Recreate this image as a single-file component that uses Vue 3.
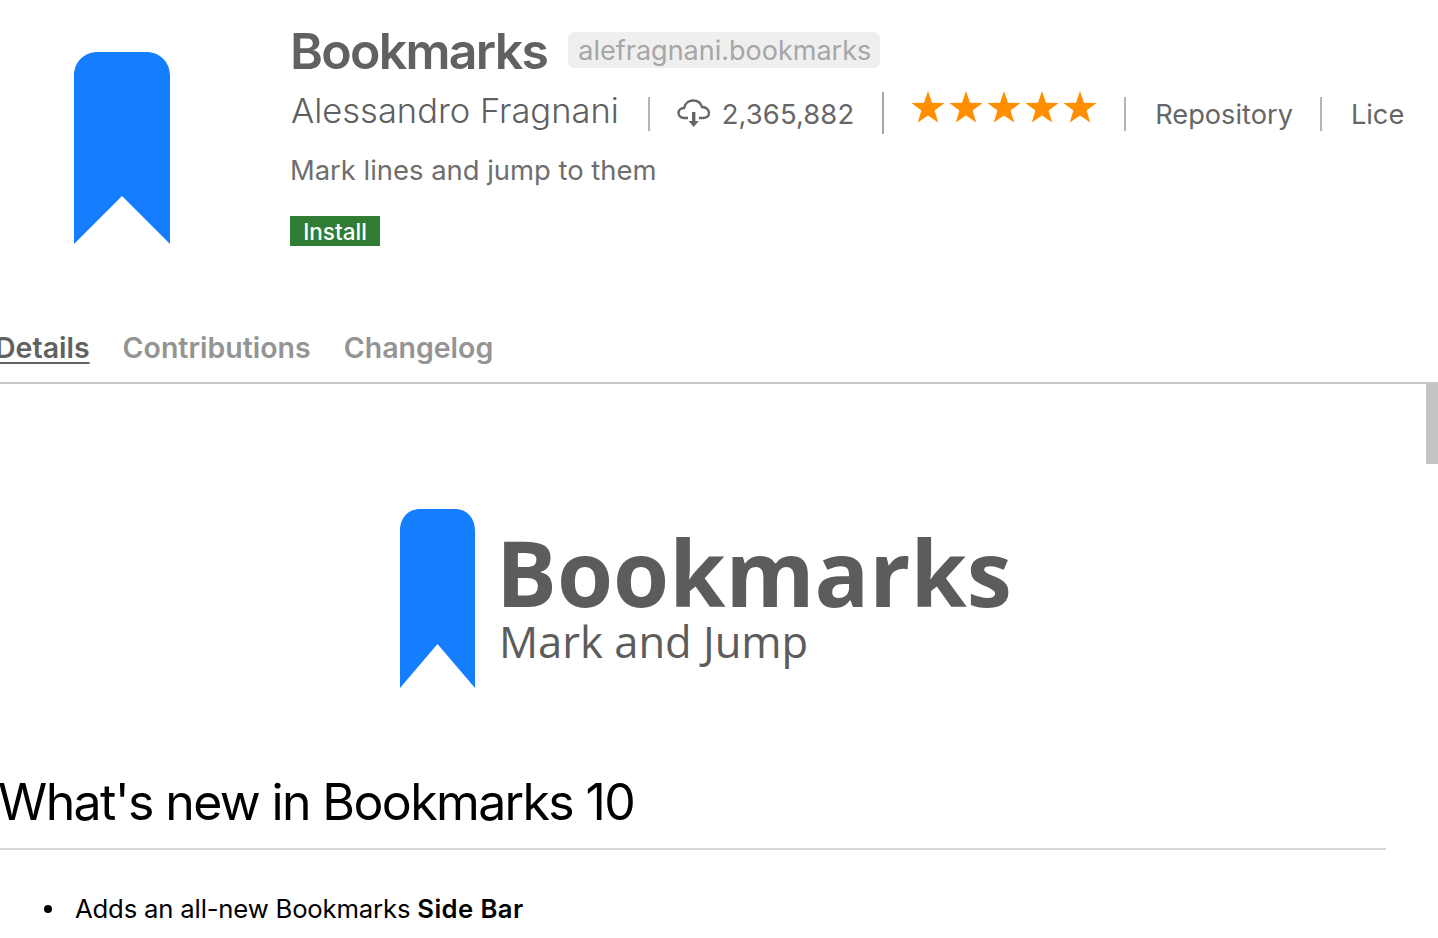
<template>
  <div class="editor">
    <header class="header">
      <div class="icon-box">
        <svg class="ext-icon" viewBox="0 0 96 192">
          <path d="M0 192V24C0 10 10 0 24 0H72C86 0 96 10 96 24V192L48 144Z" fill="#157eff" />
        </svg>
      </div>
      <div class="details">
        <div class="title-row">
          <span class="name">Bookmarks</span>
          <span class="identifier">alefragnani.bookmarks</span>
        </div>
        <div class="subtitle">
          <span class="item author">Alessandro Fragnani</span>
          <span class="item installs">
            <svg class="cloud" viewBox="0 0 34 30">
              <path d="M11 20H7C3.5 20 1.5 17.5 1.5 15C1.5 12 4 10 7 10C8 5 12 2.5 16 2.5C21 2.5 24 5.5 25 9C29.5 9 32 12 32 15C32 18 29.5 20 26 20H22" fill="none" stroke="#666" stroke-width="2.4" />
              <path d="M15 14H18.4V23H21.8L16.7 29L11.6 23H15Z" fill="#666" />
            </svg>
            <span class="count">2,365,882</span>
          </span>
          <span class="item rating">
            <svg v-for="n in 5" :key="n" class="star" viewBox="0 0 34 32">
              <polygon points="17,0 21,11.8 33.6,12 23.6,19.6 27.2,31.6 17,24.4 6.8,31.6 10.4,19.6 0.4,12 13,11.8" fill="#ff8e00" />
            </svg>
          </span>
          <span class="item">Repository</span>
          <span class="item last">License</span>
        </div>
        <div class="description">Mark lines and jump to them</div>
        <button class="install">Install</button>
      </div>
    </header>

    <nav class="tabs">
      <a class="tab active">Details</a>
      <a class="tab">Contributions</a>
      <a class="tab">Changelog</a>
    </nav>

    <main class="readme">
      <div class="logo">
        <svg class="logo-mark" viewBox="0 0 75 179">
          <path d="M0 179V22C0 9 8 0 20 0H55C67 0 75 9 75 22V179L37.5 135Z" fill="#157eff" />
        </svg>
        <div class="logo-text">
          <span class="logo-title">Bookmarks</span>
          <span class="logo-sub">Mark and Jump</span>
        </div>
      </div>
      <h1 class="heading">What's new in Bookmarks 10</h1>
      <ul class="list">
        <li><span>Adds an all-new Bookmarks <strong>Side Bar</strong></span></li>
      </ul>
    </main>

    <div class="scrollbar"></div>
  </div>
</template>

<script setup>
</script>

<style>
html, body {
  overflow: hidden;
  background: #fff;
}
</style>

<style scoped>
.editor {
  position: relative;
  width: 1438px;
  height: 938px;
  overflow: hidden;
  background: #fff;
  font-family: Inter, "Liberation Sans", sans-serif;
}

.header {
  display: flex;
  height: 316px;
}

.icon-box {
  width: 290px;
  flex: none;
  padding: 52px 0 0 74px;
  box-sizing: border-box;
}

.ext-icon {
  display: block;
  width: 96px;
  height: 192px;
}

.details {
  width: 1114px;
  overflow: hidden;
  padding-top: 22px;
  box-sizing: border-box;
}

.title-row {
  display: flex;
  align-items: center;
  height: 60px;
  white-space: nowrap;
}

.name {
  font-size: 50px;
  font-weight: 600;
  letter-spacing: -1.7px;
  color: #616161;
  margin-top: -2px;
}

.identifier {
  margin-left: 21px;
  padding: 0 9px 0 10px;
  height: 36px;
  line-height: 38px;
  border-radius: 6px;
  background: #efefef;
  color: #a6a6a6;
  font-size: 27px;
  font-weight: 400;
  margin-top: -4px;
}

.subtitle {
  display: flex;
  align-items: center;
  height: 62px;
  white-space: nowrap;
  color: #666;
  font-size: 27.2px;
  font-weight: 400;
}

.item {
  display: flex;
  align-items: center;
  height: 34px;
  padding: 0 27px 0 29px;
  border-right: 2px solid #b4b4b4;
  margin-top: 2px;
}

.item.last {
  border-right: none;
}

.author {
  align-items: flex-start;
  padding: 0 29px 0 1px;
  font-size: 34.5px;
  font-weight: 300;
  line-height: 28px;
  color: #5f5f5f;
}

.installs {
  height: 42px;
  margin-top: 0;
  gap: 11px;
  padding-right: 28px;
  border-right-color: #a6a6a6;
}

.count {
  margin-top: 2px;
  font-size: 27.4px;
  letter-spacing: 0.1px;
}

.cloud {
  width: 34px;
  height: 30px;
  margin-left: -2px;
}

.rating {
  gap: 4px;
  height: 34px;
  padding-left: 27px;
}

.star {
  width: 34px;
  height: 32px;
  margin-top: -14px;
}

.description {
  margin-top: 9px;
  height: 34px;
  line-height: 34px;
  font-size: 27.4px;
  color: #6e6e6e;
  white-space: nowrap;
}

.install {
  display: block;
  margin-top: 29px;
  width: 90px;
  height: 30px;
  padding: 0;
  border: none;
  background: #2e7d32;
  color: #fff;
  font-family: inherit;
  font-size: 22.5px;
  font-weight: 500;
}

.tabs {
  display: flex;
  align-items: center;
  gap: 33px;
  height: 62px;
  padding-bottom: 4px;
  margin-left: -5px;
  border-bottom: 2px solid #c8c8c8;
  box-sizing: content-box;
}

.tab {
  font-size: 28.5px;
  font-weight: 600;
  color: #949494;
  white-space: nowrap;
}

.tab.active {
  color: #616161;
  text-decoration: underline;
  text-underline-offset: 4px;
}

.readme {
  width: 1386px;
}

.logo {
  display: flex;
  gap: 21px;
  padding: 125px 0 0 400px;
  height: 179px;
}

.logo-mark {
  display: block;
  width: 75px;
  height: 179px;
  flex: none;
}

.logo-text {
  display: flex;
  flex-direction: column;
  font-family: "Open Sans", sans-serif;
  color: #5c5c5c;
  white-space: nowrap;
}

.logo-title {
  font-size: 90.7px;
  font-weight: 700;
  line-height: 84px;
  margin-top: 21px;
}

.logo-sub {
  font-size: 43.5px;
  line-height: 50px;
  margin: 3px 0 0 3px;
}

.heading {
  margin: 83px 0 0 -2px;
  padding-bottom: 15px;
  height: 62px;
  border-bottom: 2px solid #d8d8d8;
  font-size: 50px;
  font-weight: 400;
  line-height: 62px;
  color: #000;
  letter-spacing: -1.63px;
  white-space: nowrap;
  box-sizing: content-box;
}

.list {
  margin: 43px 0 0;
  padding-left: 44px;
  list-style: none;
  font-size: 25.7px;
  letter-spacing: -0.18px;
  color: #000;
}

.list li {
  display: flex;
  align-items: center;
  gap: 23px;
}

.list li::before {
  content: "";
  width: 8px;
  height: 8px;
  border-radius: 50%;
  background: #000;
  flex: none;
}

.list strong {
  font-weight: 600;
  letter-spacing: 0.4px;
}

.scrollbar {
  position: absolute;
  top: 384px;
  right: 0;
  width: 12px;
  height: 80px;
  background: #c4c4c4;
}
</style>
